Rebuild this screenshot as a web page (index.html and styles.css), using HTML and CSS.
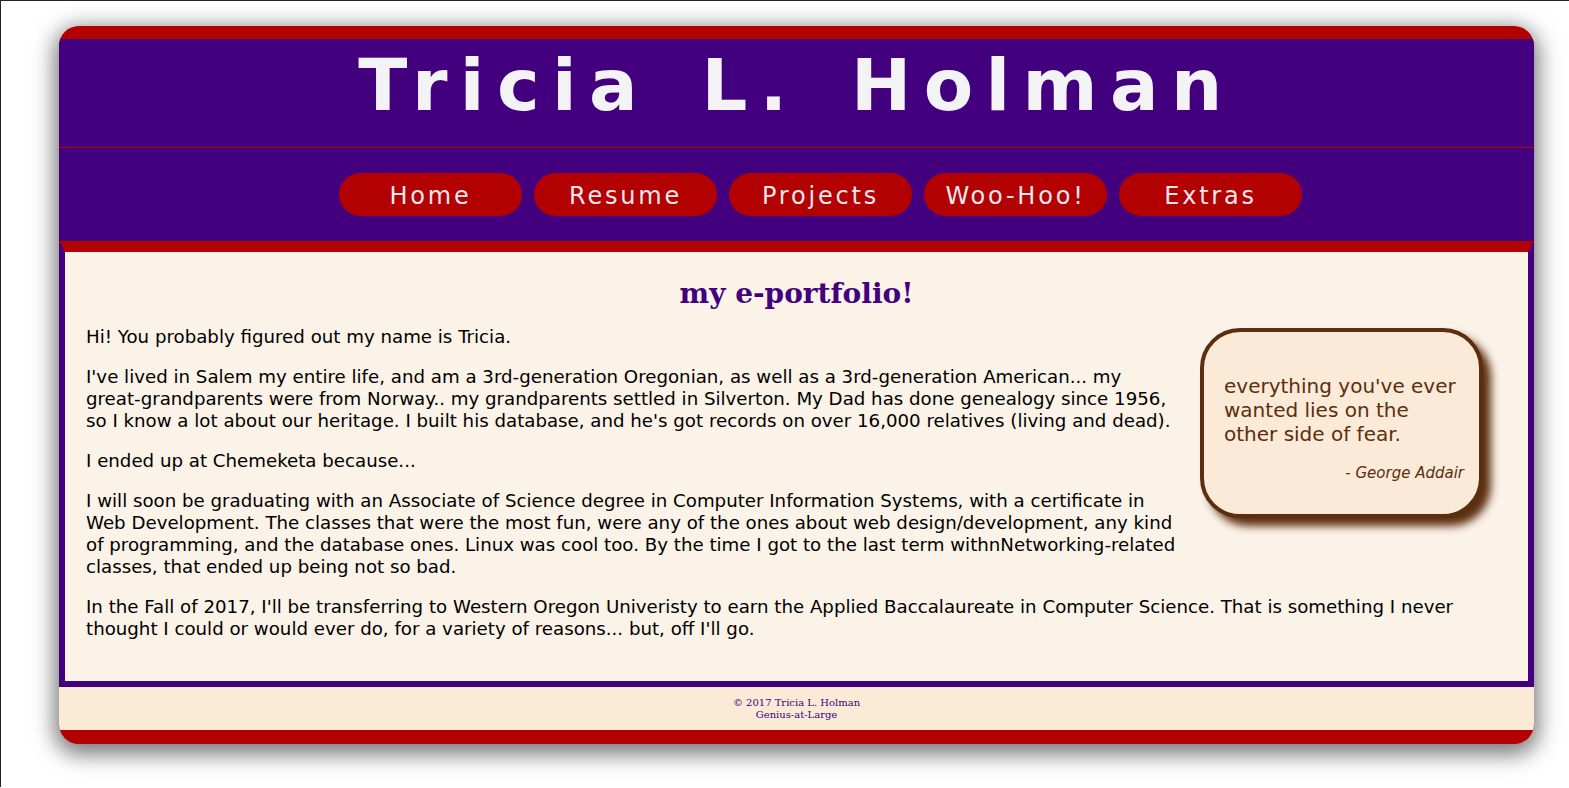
FILE: index.html
```html
<!DOCTYPE html>
<html lang="en">
<head>
<meta charset="utf-8">
<title>Tricia L. Holman</title>
<link rel="stylesheet" href="styles.css">
</head>
<body>
<div class="page">
  <header class="masthead">
    <h1 class="title">Tricia L. Holman</h1>
  </header>
  <nav class="nav">
    <ul class="nav-list">
      <li><a class="nav-btn" href="#">Home</a></li>
      <li><a class="nav-btn" href="#">Resume</a></li>
      <li><a class="nav-btn" href="#">Projects</a></li>
      <li><a class="nav-btn" href="#">Woo-Hoo!</a></li>
      <li><a class="nav-btn" href="#">Extras</a></li>
    </ul>
  </nav>
  <main class="content">
    <h2 class="heading">my e-portfolio!</h2>
    <aside class="quote">
      <p class="quote-text">everything you've ever wanted lies on the other side of fear.</p>
      <p class="quote-by">- George Addair</p>
    </aside>
    <p>Hi! You probably figured out my name is Tricia.</p>
    <p>I've lived in Salem my entire life, and am a 3rd-generation Oregonian, as well as a 3rd-generation American... my <span class="nobreak">great-grandparents</span> were from Norway.. my grandparents settled in Silverton. My Dad has done genealogy since 1956, so I know a lot about our heritage. I built his database, and he's got records on over 16,000 relatives (living and dead).</p>
    <p>I ended up at Chemeketa because...</p>
    <p>I will soon be graduating with an Associate of Science degree in Computer Information Systems, with a certificate in Web Development. The classes that were the most fun, were any of the ones about web design/development, any kind of programming, and the database ones. Linux was cool too. By the time I got to the last term withnNetworking-related classes, that ended up being not so bad.</p>
    <p>In the Fall of 2017, I'll be transferring to Western Oregon Univeristy to earn the Applied Baccalaureate in Computer Science. That is something I never thought I could or would ever do, for a variety of reasons... but, off I'll go.</p>
  </main>
  <footer class="footer">
    <p>&copy; 2017 Tricia L. Holman<br>Genius-at-Large</p>
  </footer>
</div>
</body>
</html>
```

FILE: styles.css
```css
html, body {
  margin: 0;
  padding: 0;
  background: #ffffff;
}
body {
  border-top: 1px solid #222;
  border-left: 1px solid #222;
  min-height: 787px;
  box-sizing: border-box;
  padding: 25px 0 40px 58px;
  font-family: "DejaVu Sans", Verdana, sans-serif;
}
.page {
  width: 1475px;
  background: #b30000;
  border-radius: 20px;
  overflow: hidden;
  padding: 13px 0 14px;
  box-shadow: 0 6px 22px 4px rgba(0, 0, 0, 0.55);
}
.masthead {
  background: #42007e;
  height: 108px;
  border-bottom: 1px solid #b30000;
  display: flex;
  justify-content: center;
}
.title {
  margin: 0;
  padding-top: 3px;
  font-family: "DejaVu Sans", Verdana, sans-serif;
  font-size: 72px;
  font-weight: bold;
  line-height: 86px;
  letter-spacing: 12.4px;
  word-spacing: 14px;
  color: #f3f2f5;
}
.nav {
  background: #42007e;
  padding: 25px 0;
}
.nav-list {
  list-style: none;
  margin: 0;
  padding: 0 0 0 48px;
  display: flex;
  justify-content: center;
  gap: 12px;
}
.nav-btn {
  display: block;
  width: 183px;
  height: 43px;
  line-height: 46px;
  border-radius: 22px;
  background: #b30000;
  color: #f2e6ee;
  text-align: center;
  text-decoration: none;
  font-size: 24px;
  letter-spacing: 2.8px;
}
.content {
  background: #fbf2e8;
  border-top: 11px solid #b30000;
  border-left: 6px solid #42007e;
  border-right: 6px solid #42007e;
  border-bottom: 6px solid #42007e;
  padding: 22px 21px 20px;
  min-height: 387px;
  color: #000;
  font-size: 18.2px;
  line-height: 22px;
}
.content::after {
  content: "";
  display: block;
  clear: both;
}
.nobreak {
  display: inline-block;
  white-space: nowrap;
}
.heading {
  margin: 0 0 12px;
  text-align: center;
  font-family: "DejaVu Serif", Georgia, serif;
  font-size: 28px;
  line-height: 40px;
  font-weight: bold;
  color: #42007e;
}
.content p {
  margin: 0 0 18px;
}
.quote {
  float: right;
  width: 240px;
  margin: 2px 24px 46px 18px;
  padding: 42px 15px 32px 20px;
  background: #faead7;
  border: 4px solid #5c2e0f;
  border-radius: 40px;
  box-shadow: 8px 8px 8px #5c2e0f;
  color: #5c2e0f;
}
.content .quote-text {
  margin: 0 0 18px;
  font-size: 20px;
  line-height: 24px;
}
.content .quote-by {
  margin: 0;
  text-align: right;
  font-style: italic;
  font-size: 15px;
  line-height: 18px;
}
.footer {
  background: #faead6;
  height: 43px;
  display: flex;
  justify-content: center;
  align-items: center;
}
.footer p {
  margin: 0;
  text-align: center;
  font-family: "DejaVu Serif", Georgia, serif;
  font-size: 10px;
  line-height: 12px;
  color: #42007e;
}
```
